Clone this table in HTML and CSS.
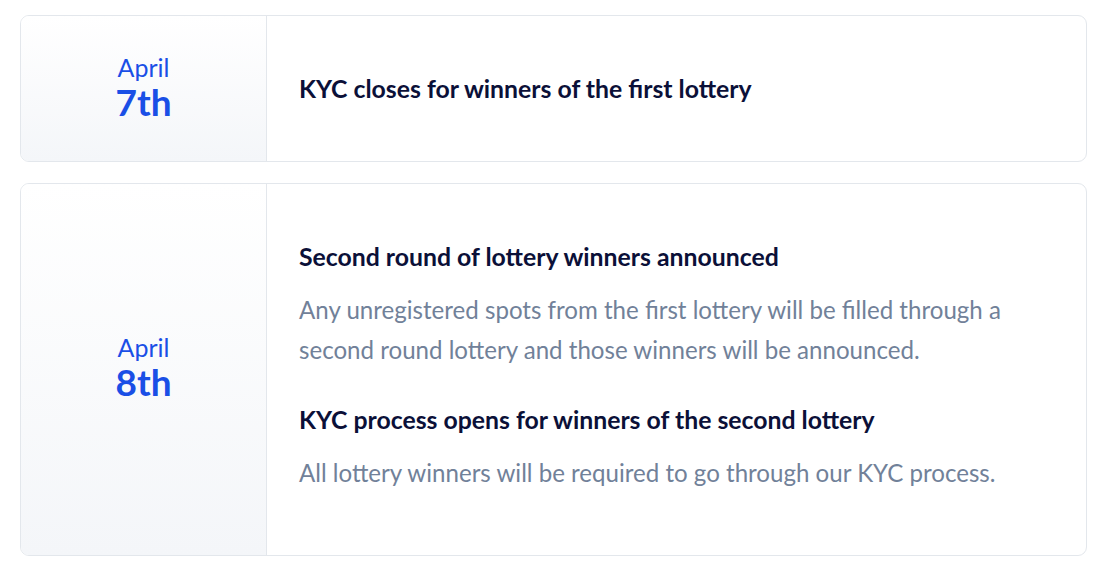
FILE: index.html
```html
<!DOCTYPE html>
<html>
<head>
<meta charset="utf-8">
<link rel="stylesheet" href="styles.css">
</head>
<body>
<div class="timeline">
  <div class="card">
    <div class="date">
      <span class="month">April</span>
      <span class="day">7th</span>
    </div>
    <div class="content">
      <div class="item">
        <h3 class="title">KYC closes for winners of the first lottery</h3>
      </div>
    </div>
  </div>
  <div class="card">
    <div class="date">
      <span class="month">April</span>
      <span class="day">8th</span>
    </div>
    <div class="content">
      <div class="item">
        <h3 class="title">Second round of lottery winners announced</h3>
        <p class="desc">Any unregistered spots from the first lottery will be filled through a second round lottery and those winners will be announced.</p>
      </div>
      <div class="item">
        <h3 class="title">KYC process opens for winners of the second lottery</h3>
        <p class="desc">All lottery winners will be required to go through our KYC process.</p>
      </div>
    </div>
  </div>
</div>
</body>
</html>
```

FILE: styles.css
```css
* { box-sizing: border-box; }
html, body { margin: 0; padding: 0; background: #ffffff; }
body { font-family: "Lato", "Open Sans", sans-serif; }
.timeline {
  padding: 15px 24px 0 20px;
  display: flex;
  flex-direction: column;
  gap: 21px;
}
.card {
  display: flex;
  border: 1.5px solid #e3e7ec;
  border-radius: 9px;
  overflow: hidden;
  background: #fff;
}
.card:first-child { min-height: 147px; }
.date {
  width: 246px;
  flex: 0 0 246px;
  border-right: 1.5px solid #e3e7ec;
  background: linear-gradient(180deg, #ffffff 0%, #f4f6f9 100%);
  display: flex;
  flex-direction: column;
  align-items: center;
  justify-content: center;
  color: #1a4fe6;
  padding-bottom: 4px;
}
.card + .card .date { padding-bottom: 6px; }
.month { font-size: 25px; line-height: 30px; font-weight: 400; }
.day { font-size: 37px; line-height: 40px; font-weight: 700; }
.content {
  flex: 1;
  display: flex;
  flex-direction: column;
  justify-content: center;
  padding: 57px 32px 62px;
  gap: 34px;
}
.card:first-child .content { padding: 0 32px; }
.title {
  margin: 0;
  font-size: 24.8px;
  line-height: 32px;
  font-weight: 700;
  color: #0b1038;
}
.desc {
  margin: 17px 0 0;
  font-size: 24.1px;
  line-height: 40px;
  color: #718199;
  max-width: 740px;
}
```
